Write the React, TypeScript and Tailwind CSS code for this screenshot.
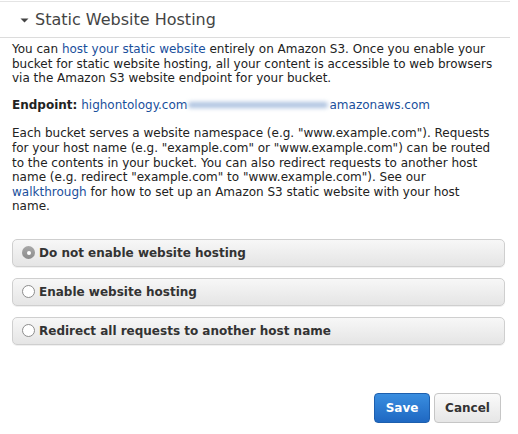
import React, { useState } from 'react';

const options = [
  'Do not enable website hosting',
  'Enable website hosting',
  'Redirect all requests to another host name',
];

export default function App() {
  const [selected, setSelected] = useState(0);

  return (
    <div className="w-[518px] h-[434px] bg-white text-[12px] text-[#222] font-['DejaVu_Sans',Verdana,sans-serif] overflow-hidden">
      <div className="w-[510px] mt-px border-t border-[#e4e4e4]">
        {/* Header */}
        <div className="h-[36px] flex items-center pl-[20px] pt-[1px] border-b border-[#dcdcdc]">
          <svg width="9" height="5" viewBox="0 0 9 5" className="mr-[6px]" aria-hidden="true">
            <path d="M0.5 0.5 H8.5 L4.5 4.5 Z" fill="#444" />
          </svg>
          <span className="text-[16px] text-[#444]">Static Website Hosting</span>
        </div>

        <div className="pl-3 pt-[4px] leading-[14.6px]">
          <p className="whitespace-nowrap">
            You can <a className="text-[#1a4f9c]">host your static website</a> entirely on Amazon S3. Once you enable your
            <br />
            bucket for static website hosting, all your content is accessible to web browsers
            <br />
            via the Amazon S3 website endpoint for your bucket.
          </p>

          <p className="mt-[12px]">
            <span className="font-bold">Endpoint:</span>{' '}
            <span className="text-[#1a4f9c]">highontology.com</span>
            <span className="inline-block align-middle w-[140px] h-[6px] mx-[1px] rounded-full bg-[#aec3e0] blur-[2px]" />
            <span className="text-[#1a4f9c]">amazonaws.com</span>
          </p>

          <p className="mt-[14px] whitespace-nowrap">
            Each bucket serves a website namespace (e.g. "www.example.com"). Requests
            <br />
            for your host name (e.g. "example.com" or "www.example.com") can be routed
            <br />
            to the contents in your bucket. You can also redirect requests to another host
            <br />
            name (e.g. redirect "example.com" to "www.example.com"). See our
            <br />
            <a className="text-[#1a4f9c]">walkthrough</a> for how to set up an Amazon S3 static website with your host
            <br />
            name.
          </p>

          {/* Radio options */}
          <div className="mt-[25px] mr-[5px] flex flex-col gap-[11px]">
            {options.map((label, i) => (
              <button
                key={label}
                onClick={() => setSelected(i)}
                className="h-[28px] flex items-center gap-[4px] pl-[9px] rounded-[5px] border border-[#cfcfcf] bg-gradient-to-b from-[#f7f7f7] to-[#e5e5e5] text-left font-bold text-[#333] shadow-[0_1px_0_#f0f0f0]"
              >
                {selected === i ? (
                  <span className="w-[13px] h-[13px] rounded-full bg-gradient-to-b from-[#a8a8a8] to-[#8c8c8c] flex items-center justify-center">
                    <span className="w-[4px] h-[4px] rounded-full bg-white" />
                  </span>
                ) : (
                  <span className="w-[13px] h-[13px] rounded-full border border-[#8d8d8d] bg-white" />
                )}
                <span>{label}</span>
              </button>
            ))}
          </div>

          {/* Actions */}
          <div className="mt-[48px] flex justify-end gap-[4px] pr-[9px]">
            <button className="w-[56px] h-[30px] rounded-[4px] border border-[#1d5fae] bg-gradient-to-b from-[#3a8ee0] to-[#1f68c2] text-white font-bold">
              Save
            </button>
            <button className="w-[67px] h-[30px] rounded-[4px] border border-[#c6c6c6] bg-gradient-to-b from-[#fafafa] to-[#e6e6e6] text-[#333] font-bold">
              Cancel
            </button>
          </div>
        </div>
      </div>
    </div>
  );
}
